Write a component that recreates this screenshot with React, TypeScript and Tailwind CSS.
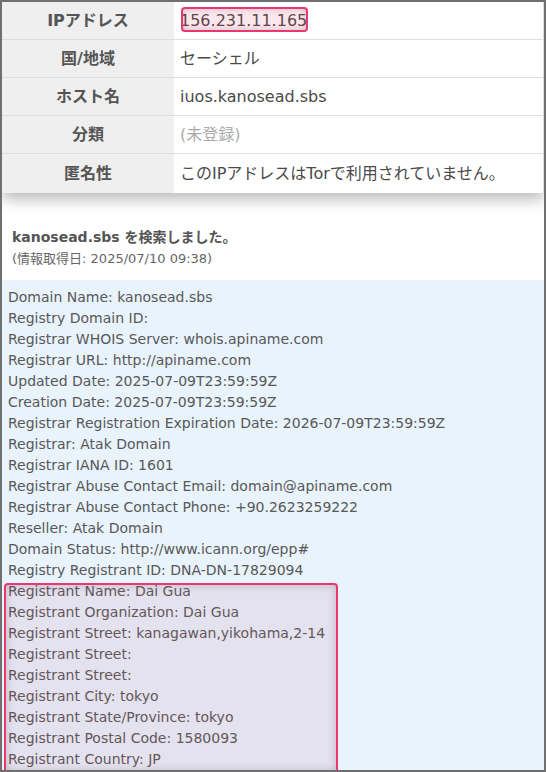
import React from "react";

const rows: { label: string; value: string; muted?: boolean }[] = [
  { label: "IPアドレス", value: "156.231.11.165" },
  { label: "国/地域", value: "セーシェル" },
  { label: "ホスト名", value: "iuos.kanosead.sbs" },
  { label: "分類", value: "(未登録)", muted: true },
  { label: "匿名性", value: "このIPアドレスはTorで利用されていません。" },
];

const whois = [
  "Domain Name: kanosead.sbs",
  "Registry Domain ID:",
  "Registrar WHOIS Server: whois.apiname.com",
  "Registrar URL: http://apiname.com",
  "Updated Date: 2025-07-09T23:59:59Z",
  "Creation Date: 2025-07-09T23:59:59Z",
  "Registrar Registration Expiration Date: 2026-07-09T23:59:59Z",
  "Registrar: Atak Domain",
  "Registrar IANA ID: 1601",
  "Registrar Abuse Contact Email: domain@apiname.com",
  "Registrar Abuse Contact Phone: +90.2623259222",
  "Reseller: Atak Domain",
  "Domain Status: http://www.icann.org/epp#",
  "Registry Registrant ID: DNA-DN-17829094",
  "Registrant Name: Dai Gua",
  "Registrant Organization: Dai Gua",
  "Registrant Street: kanagawan,yikohama,2-14",
  "Registrant Street:",
  "Registrant Street:",
  "Registrant City: tokyo",
  "Registrant State/Province: tokyo",
  "Registrant Postal Code: 1580093",
  "Registrant Country: JP",
];

const font = {
  fontFamily: '"DejaVu Sans", "Noto Sans CJK JP", sans-serif',
};

export default function App() {
  return (
    <div
      className="relative w-[546px] h-[772px] overflow-hidden border-2 border-[#6f6f6f] bg-white text-[#555]"
      style={font}
    >
      <div className="relative z-10 bg-white shadow-[0_6px_14px_rgba(0,0,0,0.28)] border-r border-[#dcdcdc]">
        {rows.map((r, i) => (
          <div
            key={r.label}
            className={`flex ${i < rows.length - 1 ? "h-[38px] border-b border-[#dedede]" : "h-[39px]"}`}
          >
            <div className="w-[172px] shrink-0 bg-[#efefef] flex items-center justify-center text-[16px] font-bold text-[#555]">
              {r.label}
            </div>
            <div
              className={`flex-1 flex items-center pl-[6px] text-[16px] ${r.muted ? "text-[#aaa]" : "text-[#4a4a4a]"}`}
            >
              {r.value}
            </div>
          </div>
        ))}
      </div>

      <div className="pt-[34px] pl-[10px] pb-[11px]">
        <div className="text-[14px] font-bold leading-[20px] text-[#555]">
          kanosead.sbs を検索しました。
        </div>
        <div className="text-[13px] leading-[20px] text-[#666] mt-[2px]">
          (情報取得日: 2025/07/10 09:38)
        </div>
      </div>

      <div className="bg-[#e8f3fc] h-full pt-[7px] pl-[6px] text-[14px] leading-[21px] text-[#585858]">
        {whois.map((l, i) => (
          <div key={i} className="whitespace-pre">
            {l}
          </div>
        ))}
      </div>

      <div className="absolute left-[179px] top-[5px] w-[127px] h-[25px] rounded-[4px] border-2 border-[#e8386d] bg-[rgba(232,56,109,0.12)] shadow-[inset_0_0_6px_rgba(120,40,70,0.25)] z-20" />
      <div className="absolute left-[2px] top-[581px] w-[334px] h-[190px] rounded-[4px] border-2 border-[#e8386d] bg-[rgba(200,80,120,0.10)] shadow-[inset_0_0_8px_rgba(90,40,80,0.25)]" />
    </div>
  );
}
